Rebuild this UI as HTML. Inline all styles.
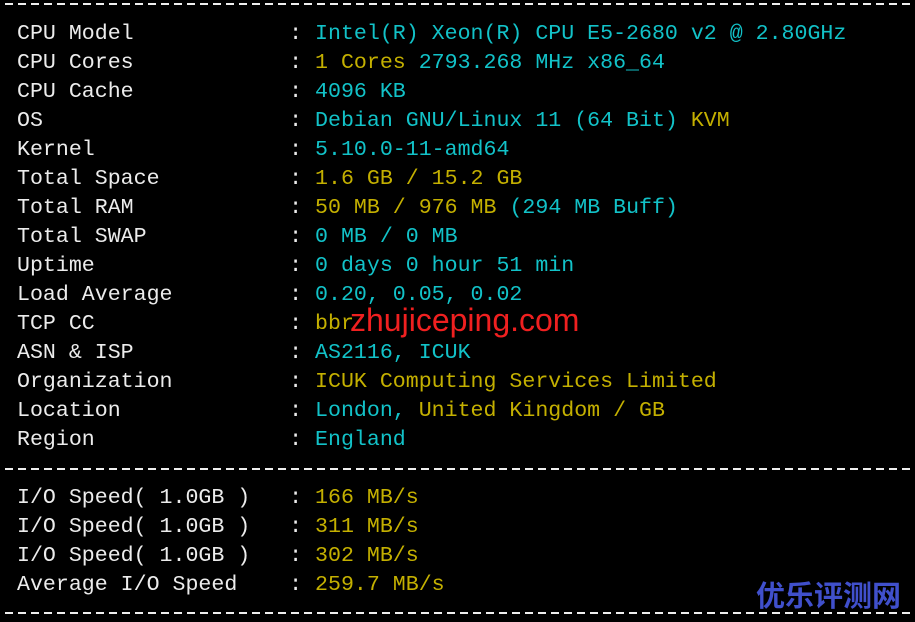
<!DOCTYPE html>
<html><head><meta charset="utf-8"><style>
html,body{margin:0;padding:0;background:#000;width:915px;height:622px;overflow:hidden;position:relative}
.l{position:absolute;left:17px;font-family:"Liberation Mono",monospace;font-size:21.6px;line-height:29px;white-space:pre;color:#ececec;height:29px}
.c{color:#12c2c8}.y{color:#c4b000}
.d{position:absolute;left:5px;width:915px;height:2px;background:repeating-linear-gradient(90deg,#eee 0 8px,transparent 8px 13px)}
.wm{position:absolute;left:350px;top:302px;font-family:"Liberation Sans","DejaVu Sans",sans-serif;font-size:32px;color:#f02020;line-height:36px}
.cn{position:absolute;left:756px;top:578px;font-family:"Noto Sans CJK SC",sans-serif;font-weight:bold;font-size:29px;color:#4050cc;line-height:32px;letter-spacing:0px}
</style></head><body>
<div class="d" style="top:3px"></div>
<div class="l" style="top:20px">CPU Model            : <span class="c">Intel(R) Xeon(R) CPU E5-2680 v2 @ 2.80GHz</span></div>
<div class="l" style="top:49px">CPU Cores            : <span class="y">1 Cores <span class="c">2793.268 MHz x86_64</span></span></div>
<div class="l" style="top:78px">CPU Cache            : <span class="c">4096 KB</span></div>
<div class="l" style="top:107px">OS                   : <span class="c">Debian GNU/Linux 11 (64 Bit) <span class="y">KVM</span></span></div>
<div class="l" style="top:136px">Kernel               : <span class="c">5.10.0-11-amd64</span></div>
<div class="l" style="top:165px">Total Space          : <span class="y">1.6 GB / 15.2 GB</span></div>
<div class="l" style="top:194px">Total RAM            : <span class="y">50 MB / 976 MB <span class="c">(294 MB Buff)</span></span></div>
<div class="l" style="top:223px">Total SWAP           : <span class="c">0 MB / 0 MB</span></div>
<div class="l" style="top:252px">Uptime               : <span class="c">0 days 0 hour 51 min</span></div>
<div class="l" style="top:281px">Load Average         : <span class="c">0.20, 0.05, 0.02</span></div>
<div class="l" style="top:310px">TCP CC               : <span class="y">bbr</span></div>
<div class="l" style="top:339px">ASN &amp; ISP            : <span class="c">AS2116, ICUK</span></div>
<div class="l" style="top:368px">Organization         : <span class="y">ICUK Computing Services Limited</span></div>
<div class="l" style="top:397px">Location             : <span class="c">London, <span class="y">United Kingdom / GB</span></span></div>
<div class="l" style="top:426px">Region               : <span class="c">England</span></div>
<div class="d" style="top:468px"></div>
<div class="l" style="top:484px">I/O Speed( 1.0GB )   : <span class="y">166 MB/s</span></div>
<div class="l" style="top:513px">I/O Speed( 1.0GB )   : <span class="y">311 MB/s</span></div>
<div class="l" style="top:542px">I/O Speed( 1.0GB )   : <span class="y">302 MB/s</span></div>
<div class="l" style="top:571px">Average I/O Speed    : <span class="y">259.7 MB/s</span></div>
<div class="d" style="top:612px"></div>
<div class="wm">zhujiceping.com</div>
<div class="cn">优乐评测网</div>
</body></html>
